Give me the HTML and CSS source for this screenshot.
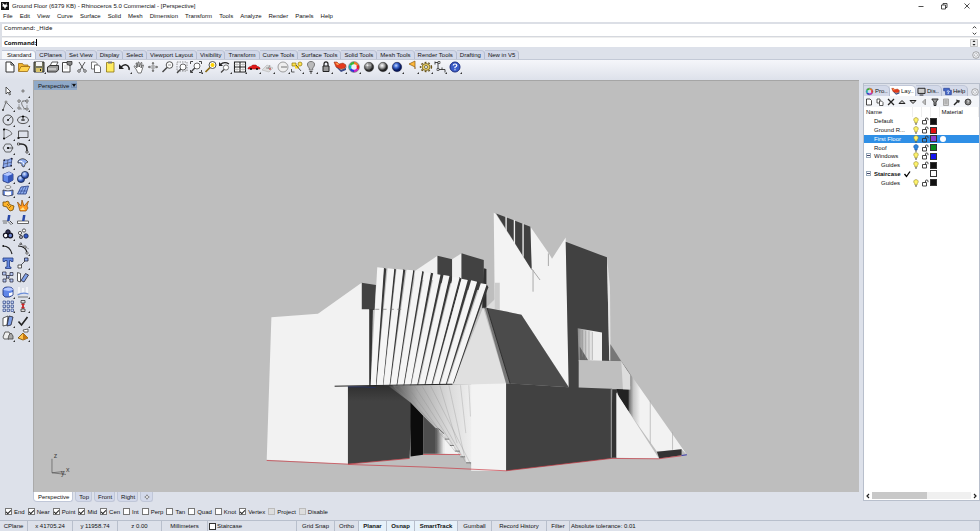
FILE: index.html
```
<!DOCTYPE html>
<html lang="en">
<head>
  <meta charset="UTF-8">
  <title>Ground Floor - Rhinoceros 5.0 Commercial</title>
  <link rel="stylesheet" href="styles.css">
</head>
<body>
  <!-- shared icons -->
  <svg class="defs" width="0" height="0">
    <symbol id="bulb" viewBox="0 0 8 8"><path d="M4 .7C1.300 .7 1.300 3.500 2.900 4.800V6H5.100V4.800C6.700 3.500 6.700 .7 4 .7z" fill="#fff36b" stroke="#99913a" stroke-width=".7"/><path d="M3 7h2" stroke="#555"/></symbol>
    <symbol id="bulb-off" viewBox="0 0 8 8"><path d="M4 .7C1.300 .7 1.300 3.500 2.900 4.800V6H5.100V4.800C6.700 3.500 6.700 .7 4 .7z" fill="#2f86e0" stroke="#1c5aa8" stroke-width=".7"/><path d="M3 7h2" stroke="#555"/></symbol>
    <symbol id="unlock" viewBox="0 0 8 8"><path d="M1.500 3.500h4v3.500h-4zM4.500 3.500V2q0-1 1.200-1T7 2v1.200" fill="none" stroke="#333" stroke-width=".9"/></symbol>
    <symbol id="layers" viewBox="0 0 14 14"><path d="M3 7l5 5 5-2V7z" fill="#3a4a8a"/><path d="M3 6l5 4 5-2V6z" fill="#fff" stroke="#444" stroke-width=".5"/><path d="M1 2l3 0 2 2 4-1 3 2-1 3-4 1-5-2z" fill="#e43a1c" stroke="#831" stroke-width=".5"/><path d="M2 2.500l3 .5 1 2-2 0z" fill="#ff9a50"/></symbol>
    <symbol id="wheel" viewBox="0 0 14 14"><g fill="none" stroke-width="2.500"><path d="M7 3a4 4 0 0 1 3.500 2" stroke="#f08020"/><path d="M10.500 5a4 4 0 0 1 0 4" stroke="#e22"/><path d="M10.500 9A4 4 0 0 1 7 11" stroke="#c2c"/><path d="M7 11a4 4 0 0 1-3.500-2" stroke="#33d"/><path d="M3.500 9a4 4 0 0 1 0-4" stroke="#1bb"/><path d="M3.500 5A4 4 0 0 1 7 3" stroke="#3b3"/></g><circle cx="7" cy="7" r="5.400" fill="none" stroke="#444" stroke-width=".5"/></symbol>
    <symbol id="gear" viewBox="0 0 8 8"><circle cx="4" cy="4" r="3.300" fill="#eef0f5" stroke="#777" stroke-width=".6"/><circle cx="4" cy="4" r="1.500" fill="none" stroke="#888" stroke-width=".6" stroke-dasharray="1 .6"/></symbol>
    <radialGradient id="ballGrey" cx=".4" cy=".35"><stop offset="0" stop-color="#fff"/><stop offset=".5" stop-color="#aaa"/><stop offset="1" stop-color="#222"/></radialGradient>
    <radialGradient id="ballBlue" cx=".4" cy=".35"><stop offset="0" stop-color="#c5d8ff"/><stop offset=".5" stop-color="#3a66d0"/><stop offset="1" stop-color="#081a60"/></radialGradient>
    <radialGradient id="ballSoft" cx=".4" cy=".35"><stop offset="0" stop-color="#e2ebff"/><stop offset=".6" stop-color="#6a8fe0"/><stop offset="1" stop-color="#2a48a0"/></radialGradient>
  </svg>

  <header class="titlebar">
    <svg class="logo" viewBox="0 0 8 8"><path d="M0 0h8v8H0z" fill="#111"/><path d="M1 1l2 1 1 1 2-2-.5 2L7 4 5 5 4 7 3 5 1 4l1-1z" fill="#fff"/></svg>
    <h1>Ground Floor (6379 KB) - Rhinoceros 5.0 Commercial - [Perspective]</h1>
    <div class="winbuttons">
      <button type="button" aria-label="Minimize"><svg viewBox="0 0 8 8"><path d="M1.500 4.500h5" stroke="#222" stroke-width=".8"/></svg></button>
      <button type="button" aria-label="Restore"><svg viewBox="0 0 8 8"><path d="M1.500 3h4v4h-4zM3 3V1.500h4v4H5.500" fill="none" stroke="#222" stroke-width=".8"/></svg></button>
      <button type="button" aria-label="Close"><svg viewBox="0 0 8 8"><path d="M1.500 1.500l5 5M6.500 1.500l-5 5" stroke="#222" stroke-width=".8"/></svg></button>
    </div>
  </header>

  <nav class="menu">
    <a href="#">File</a><a href="#">Edit</a><a href="#">View</a><a href="#">Curve</a><a href="#">Surface</a><a href="#">Solid</a><a href="#">Mesh</a><a href="#">Dimension</a><a href="#">Transform</a><a href="#">Tools</a><a href="#">Analyze</a><a href="#">Render</a><a href="#">Panels</a><a href="#">Help</a>
  </nav>

  <section class="command">
    <div class="history"><span>Command: _Hide</span>
      <svg class="arrows" viewBox="0 0 8 14"><path d="M2 4.500l2-2 2 2M2 9.500l2 2 2-2" fill="none" stroke="#222"/></svg>
    </div>
    <div class="prompt"><label for="cmd">Command:</label><span class="caret"></span><input id="cmd" type="text">
      <svg class="spin" viewBox="0 0 8 8"><path d="M.5.5h7v7h-7z" fill="#eee" stroke="#aaa" stroke-width=".6"/><path d="M2.500 3L4 1.300 5.500 3zM2.500 5L4 6.700 5.500 5z" fill="#222"/></svg>
    </div>
  </section>

  <nav class="tooltabs">
    <button type="button" class="on">Standard</button><button type="button">CPlanes</button><button type="button">Set View</button><button type="button">Display</button><button type="button">Select</button><button type="button">Viewport Layout</button><button type="button">Visibility</button><button type="button">Transform</button><button type="button">Curve Tools</button><button type="button">Surface Tools</button><button type="button">Solid Tools</button><button type="button">Mesh Tools</button><button type="button">Render Tools</button><button type="button">Drafting</button><button type="button">New in V5</button>
    <svg class="cog"><use href="#gear"/></svg>
  </nav>

  <div class="toolbar">
    <div class="tools">
      <button type="button" aria-label="New"><svg viewBox="0 0 14 14"><path d="M3 2h5l3 3v7H3zM8 2v3h3" fill="#fff" stroke="#333"/></svg></button>
      <button type="button" aria-label="Open"><svg viewBox="0 0 14 14"><path d="M1.500 11V3.500h4l1 1.500H11v2" fill="#f2b632" stroke="#9a6a10" stroke-width=".8"/><path d="M1.500 11.500L4 6.500h9l-2.500 5z" fill="#ffd34d" stroke="#9a6a10" stroke-width=".8"/></svg></button>
      <button type="button" class="fly" aria-label="Save"><svg viewBox="0 0 14 14"><path d="M2 2h10v10H2z" fill="#77775f" stroke="#333"/><path d="M4 2h6v4H4z" fill="#f5f5f5"/><path d="M4 8h6v4H4z" fill="#d8c46a"/><path d="M8 9h1v2H8z" fill="#222"/></svg></button>
      <button type="button" aria-label="Print"><svg viewBox="0 0 14 14"><path d="M4 6l2-4h6l-2 4" fill="#fff" stroke="#333" stroke-width=".8"/><path d="M1.500 7L4 5.500h8.500V10L10 12H1.500z" fill="#999" stroke="#333"/><path d="M2 9h8" stroke="#eee"/></svg></button>
      <button type="button" aria-label="Document Properties"><svg viewBox="0 0 14 14"><path d="M2.500 2.500h7.500v9.500h-7.500z" fill="#fff" stroke="#444"/><path d="M4 6h4M4 8h4" stroke="#bbb" stroke-width=".7"/><path d="M7 1.500h5v3l-2 1-3-1z" fill="#888" stroke="#222" stroke-width=".7"/></svg></button>
      <button type="button" aria-label="Cut"><svg viewBox="0 0 14 14"><path d="M4 2l5 8M10 2L5 10" stroke="#555"/><circle cx="4" cy="11" r="1.300" fill="none" stroke="#444" stroke-width=".8"/><circle cx="10" cy="11" r="1.300" fill="none" stroke="#444" stroke-width=".8"/></svg></button>
      <button type="button" aria-label="Copy"><svg viewBox="0 0 14 14"><path d="M2.500 2h4L8 3.500V9H2.500z" fill="#fff" stroke="#555" stroke-width=".8"/><path d="M5.500 5h4L11.500 7v5.500h-6z" fill="#fff" stroke="#444" stroke-width=".8"/></svg></button>
      <button type="button" aria-label="Paste"><svg viewBox="0 0 14 14"><path d="M3.500 2.500h7.500V12H3.500z" fill="#ffec62" stroke="#8a7410" stroke-width=".8"/><path d="M5 1.500h4v2H5z" fill="#777"/></svg></button>
      <button type="button" class="fly" aria-label="Undo"><svg viewBox="0 0 14 14"><path d="M3 7q4-4 7-1 1.500 1.500 1 4" fill="none" stroke="#222" stroke-width="1.400"/><path d="M1 4v5h5z" fill="#222"/></svg></button>
      <button type="button" aria-label="Pan"><svg viewBox="0 0 14 14"><path d="M4 9L2 6.500l1-.8L5 8 4 3h1l1 4V2h1l.5 5L9 2.500l1 .3L9 8l1.500-3h1L10 10l-1 3H6z" fill="#fff" stroke="#444" stroke-width=".7"/></svg></button>
      <button type="button" aria-label="Rotate View"><svg viewBox="0 0 14 14"><path d="M7 2v10M2 7h10M7 2L6 4h2zM7 12l-1-2h2zM2 7l2-1v2zM12 7l-2-1v2z" stroke="#777" stroke-width=".6" fill="#666"/><ellipse cx="7" cy="7" rx="3" ry="1.500" fill="none" stroke="#999" stroke-width=".6"/></svg></button>
      <button type="button" aria-label="Zoom Dynamic"><svg viewBox="0 0 14 14"><circle cx="8.500" cy="5" r="3.300" fill="#fff" stroke="#444" stroke-width=".9"/><path d="M6 7.500L1.500 12" stroke="#444" stroke-width="1.500"/><path d="M7 5h3" stroke="#777" stroke-width=".7"/></svg></button>
      <button type="button" aria-label="Zoom Window"><svg viewBox="0 0 14 14"><path d="M2 2h10v9H2z" fill="none" stroke="#777" stroke-width=".8" stroke-dasharray="1.500 1"/><circle cx="8" cy="7" r="3" fill="#fff" stroke="#444" stroke-width=".8"/><path d="M5.800 9L2 13" stroke="#444" stroke-width="1.300"/></svg></button>
      <button type="button" class="fly" aria-label="Zoom Extents"><svg viewBox="0 0 14 14"><path d="M1.500 4V1.500H4M10 1.500h2.500V4M12.500 10v2.500H10M4 12.500H1.500V10" fill="none" stroke="#333" stroke-width=".9"/><circle cx="8" cy="6" r="3" fill="#fff" stroke="#444" stroke-width=".8"/><path d="M5.800 8L2 12" stroke="#444" stroke-width="1.300"/></svg></button>
      <button type="button" aria-label="Zoom Selected"><svg viewBox="0 0 14 14"><circle cx="8.500" cy="5" r="3.500" fill="#fff" stroke="#444" stroke-width=".9"/><circle cx="8.500" cy="5" r="2" fill="#ffd400"/><path d="M6 7.500L1.500 12" stroke="#8a6a10" stroke-width="1.700"/></svg></button>
      <button type="button" class="fly" aria-label="Undo View"><svg viewBox="0 0 14 14"><path d="M2 5q4-4 9-1" fill="none" stroke="#222" stroke-width="1.200"/><path d="M1 2v4h4z" fill="#222"/><circle cx="8" cy="7.500" r="2.600" fill="#fff" stroke="#555" stroke-width=".8"/><path d="M6 9.500L3 12.500" stroke="#444" stroke-width="1.300"/></svg></button>
      <button type="button" class="fly" aria-label="Four View"><svg viewBox="0 0 14 14"><path d="M1.500 2h11v10h-11zM7 2v10M1.500 7h11" fill="#fff" stroke="#222" stroke-width="1.100"/><path d="M4 2v10M10 2v10M1.500 4.500h11M1.500 9.500h11" stroke="#999" stroke-width=".5"/></svg></button>
      <button type="button" class="fly" aria-label="Shade"><svg viewBox="0 0 14 14"><path d="M1 8q1-1.500 3-1.500l1.500-1.500H9l1.500 1.500q2 .3 2.500 1.500v1H1z" fill="#e01818" stroke="#901010" stroke-width=".5"/><circle cx="4" cy="9" r="1"/><circle cx="10" cy="9" r="1"/></svg></button>
      <button type="button" class="fly" aria-label="CPlane"><svg viewBox="0 0 14 14"><path d="M1 10l5-5 6 3-4 4z" fill="#ddd" stroke="#bbb" stroke-width=".7"/><path d="M5 8h5M7 9l2-4" stroke="#888" stroke-width=".8"/><circle cx="9" cy="9" r=".9" fill="#c55"/></svg></button>
      <button type="button" class="fly" aria-label="Hide"><svg viewBox="0 0 14 14"><circle cx="7" cy="7" r="5" fill="#eee" stroke="#888" stroke-width=".8"/><path d="M5 7h6" stroke="#555" stroke-width=".8"/></svg></button>
      <button type="button" class="fly" aria-label="Object Snap"><svg viewBox="0 0 14 14"><path d="M2 3h4v3H2z" fill="#ffe34d" stroke="#8a7410" stroke-width=".7"/><circle cx="10" cy="4" r="2" fill="#ffe34d" stroke="#8a7410" stroke-width=".7"/><path d="M5 5.500h4v3H5z" fill="#ffd82a"/><path d="M6 5l5 6M1.500 9v3h3" stroke="#333" stroke-width=".8" fill="none"/></svg></button>
      <button type="button" class="fly" aria-label="Show"><svg viewBox="0 0 14 14"><path d="M7 1.500C2.500 1.500 2.800 6 5.300 8v2h3.400V8C11.200 6 11.500 1.500 7 1.500z" fill="#bbb" stroke="#777"/><path d="M5.500 11.500h3M6 13h2" stroke="#444"/></svg></button>
      <button type="button" class="fly" aria-label="Lock"><svg viewBox="0 0 14 14"><path d="M5 6V4q0-2.200 2-2.200T9 4v2" fill="none" stroke="#222" stroke-width="1.200"/><path d="M4 6h6v5.500H4z" fill="#999" stroke="#222"/></svg></button>
      <button type="button" class="fly" aria-label="Layers"><svg><use href="#layers"/></svg></button>
      <button type="button" class="fly" aria-label="Properties"><svg><use href="#wheel"/></svg></button>
      <button type="button" aria-label="Render Preview"><svg viewBox="0 0 14 14"><circle cx="7" cy="7" r="4.700" fill="url(#ballGrey)" stroke="#333" stroke-width=".5"/><path d="M7 2.500v9M2.500 7h9" stroke="#555" stroke-width=".6"/></svg></button>
      <button type="button" class="fly" aria-label="Render"><svg viewBox="0 0 14 14"><circle cx="7" cy="7" r="4.700" fill="url(#ballGrey)" stroke="#333" stroke-width=".5"/></svg></button>
      <button type="button" class="fly" aria-label="Render Blue"><svg viewBox="0 0 14 14"><circle cx="7" cy="7" r="4.700" fill="url(#ballBlue)" stroke="#113" stroke-width=".5"/></svg></button>
      <button type="button" class="fly" aria-label="Spotlight"><svg viewBox="0 0 14 14"><path d="M4 4l6-3v6z" fill="#ffb83a" stroke="#8a5a10" stroke-width=".7"/><path d="M10 7v2" stroke="#8a5a10"/></svg></button>
      <button type="button" class="fly" aria-label="Options"><svg viewBox="0 0 14 14"><ellipse cx="7" cy="7" rx="4" ry="3.500" fill="#e8cd62" stroke="#6a5a20" stroke-width=".8"/><ellipse cx="7" cy="7" rx="5.500" ry="4.500" fill="none" stroke="#6a5418" stroke-width="1.400" stroke-dasharray="1.800 1.800"/><circle cx="7" cy="7" r="1.500" fill="#fff" stroke="#443" stroke-width=".7"/></svg></button>
      <button type="button" class="fly" aria-label="Dimension"><svg viewBox="0 0 14 14"><path d="M2 2.500h3v7h7v3M2 1.500v3M9 9.500v-2" fill="none" stroke="#333" stroke-width=".9"/><path d="M5 1.500h2v2H5zM4 8.500h2v2H4z" fill="#fff" stroke="#333" stroke-width=".7"/></svg></button>
      <button type="button" class="fly" aria-label="Help"><svg viewBox="0 0 14 14"><circle cx="7" cy="7" r="5" fill="#3a5cc8" stroke="#1a2c80"/><path d="M5.200 5.500Q5.400 4 7 4t1.800 1.400Q8.800 6.500 7 7.200v1M7 9.300v1" fill="none" stroke="#fff" stroke-width="1.200"/></svg></button>
    </div>
  </div>

  <main class="work">
    <aside class="sidetools">
      <button type="button" aria-label="Select"><svg viewBox="0 0 14 14"><path d="M5 3v7l2-2 1.500 3 1-.5L8.300 8H10z" fill="#fff" stroke="#333" stroke-width=".8"/></svg></button>
      <button type="button" class="fly" aria-label="Point"><svg viewBox="0 0 14 14"><circle cx="7" cy="7" r="1.100" fill="#fff" stroke="#333" stroke-width=".7"/></svg></button>
      <button type="button" class="fly" aria-label="Polyline"><svg viewBox="0 0 14 14"><path d="M2 12l3-8 7 7" fill="none" stroke="#555" stroke-width=".8"/><circle cx="5" cy="4" r="1" fill="#fff" stroke="#333" stroke-width=".6"/><circle cx="2" cy="12" r="1" fill="#333"/></svg></button>
      <button type="button" class="fly" aria-label="Curve"><svg viewBox="0 0 14 14"><path d="M11 3q-7-1-5 4t5 4" fill="none" stroke="#666" stroke-width=".8"/><path d="M3 3h8v8H3z" fill="none" stroke="#777" stroke-width=".6" stroke-dasharray="2 1"/><path d="M2 2h2v2H2zM10 2h2v2h-2zM10 10h2v2h-2zM2 9h2v2H2z" fill="#fff" stroke="#333" stroke-width=".6"/></svg></button>
      <button type="button" class="fly" aria-label="Circle"><svg viewBox="0 0 14 14"><circle cx="7" cy="7" r="5" fill="none" stroke="#444" stroke-width=".9"/><path d="M7 7l4-4" stroke="#444" stroke-width=".8"/><circle cx="7" cy="7" r=".9"/></svg></button>
      <button type="button" class="fly" aria-label="Ellipse"><svg viewBox="0 0 14 14"><ellipse cx="7" cy="7" rx="5.500" ry="3.600" fill="none" stroke="#444" stroke-width=".9"/><path d="M5 7h4M7 3v5" stroke="#333"/><circle cx="7" cy="3.400" r="1"/></svg></button>
      <button type="button" class="fly" aria-label="Arc"><svg viewBox="0 0 14 14"><path d="M3 2q7 1 8 5L3 12z" fill="none" stroke="#555" stroke-width=".8"/><circle cx="3" cy="2.500" r="1"/><circle cx="3" cy="11.500" r="1"/></svg></button>
      <button type="button" class="fly" aria-label="Rectangle"><svg viewBox="0 0 14 14"><path d="M2.500 4h9.500v6.500H2.500z" fill="none" stroke="#444" stroke-width=".9"/><path d="M1.500 10h2v2h-2z" fill="#222"/></svg></button>
      <button type="button" class="fly" aria-label="Polygon"><svg viewBox="0 0 14 14"><path d="M4.500 3h5L12 7l-2.500 4h-5L2 7z" fill="none" stroke="#444" stroke-width=".8"/><path d="M7 7h5" stroke="#333" stroke-width=".8"/><circle cx="7" cy="7" r="1.100"/></svg></button>
      <button type="button" class="fly" aria-label="Fillet"><svg viewBox="0 0 14 14"><path d="M2 3h3q6 0 6 6v3" fill="none" stroke="#222" stroke-width="1.500"/><path d="M1.500 2h2v2h-2zM10 10h2v2h-2z" fill="#fff" stroke="#222" stroke-width=".7"/></svg></button>
      <button type="button" class="fly" aria-label="Surface"><svg viewBox="0 0 14 14"><path d="M3 4q4 1 8-2l-1 8q-4 0-8 2z" fill="#8fadf0" stroke="#223a80" stroke-width=".7"/><path d="M7 3.500L6 11M3 8l8-2" stroke="#334" stroke-width=".5"/><path d="M2.500 3.500h1.500V5H2.500zM10 2h1.500v1.500H10zM9.500 9H11v1.500H9.500zM1.500 11H3v1.500H1.500z" fill="#223"/></svg></button>
      <button type="button" class="fly" aria-label="Sweep"><svg viewBox="0 0 14 14"><path d="M2 5q4-4 8-1l2 2q-3 0-4 5l-2-1q0-4-4-3z" fill="#8fadf0" stroke="#333" stroke-width=".8"/><path d="M3 5.500q4-1 5 3" fill="none" stroke="#fff"/></svg></button>
      <button type="button" class="fly" aria-label="Box"><svg viewBox="0 0 14 14"><path d="M2 4.500L8 2l4 2v6l-5 3-5-2z" fill="#5f86e8" stroke="#1a2c70" stroke-width=".8"/><path d="M2 4.500L8 2l4 2-5 2z" fill="#b5c8ff"/><path d="M7 6l5-2v6l-5 3z" fill="#3556b8"/></svg></button>
      <button type="button" class="fly" aria-label="Boolean"><svg viewBox="0 0 14 14"><circle cx="5" cy="9" r="3.600" fill="url(#ballSoft)" stroke="#124" stroke-width=".7"/><circle cx="9" cy="5" r="3.600" fill="url(#ballSoft)" stroke="#124" stroke-width=".7"/></svg></button>
      <button type="button" class="fly" aria-label="Extract"><svg viewBox="0 0 14 14"><path d="M2 6v5q5 2 10 0V6q-5 2-10 0z" fill="#6d92e8" stroke="#334" stroke-width=".8"/><path d="M4 7.500v3.500q3 .8 6 0V7.500z" fill="#fff"/><ellipse cx="7" cy="3" rx="3" ry="1.400" fill="#fff" stroke="#666" stroke-width=".7"/></svg></button>
      <button type="button" class="fly" aria-label="Mesh"><svg viewBox="0 0 14 14"><path d="M1.500 10L5 3l7.500-1L10 10z" fill="#8faef0" stroke="#223a80" stroke-width=".8"/><path d="M4 10l3.500-7M7 10l3-7M3 7h8" stroke="#223a80" stroke-width=".6"/></svg></button>
      <button type="button" aria-label="Join"><svg viewBox="0 0 14 14"><path d="M2 3h3l1-1 2 1v2l2 1 3 1-1 4-3 1-2-2-1-2-4-1z" fill="#ffb42a" stroke="#704a08" stroke-width=".8"/><path d="M6 5l2 2M8 9l2-2" stroke="#704a08" stroke-width=".7"/></svg></button>
      <button type="button" aria-label="Explode"><svg viewBox="0 0 14 14"><path d="M1.500 3L5 7l1-6 2 6 4.500-5L11 7l1 2-2 3H4z" fill="#ff9a1e" stroke="#8a4a08" stroke-width=".7"/><path d="M4 11l3-3 2 3" fill="#ffe08a"/></svg></button>
      <button type="button" aria-label="Trim"><svg viewBox="0 0 14 14"><path d="M1.500 8h5l4 4M2 10h4" stroke="#555" stroke-width=".8" fill="none"/><path d="M7 2h2.500l-1 6H6z" fill="#2848a8"/><path d="M9 8l3 3" stroke="#222" stroke-width=".8"/></svg></button>
      <button type="button" aria-label="Split"><svg viewBox="0 0 14 14"><path d="M1.500 8h11v2.500h-11z" fill="#fff" stroke="#444" stroke-width=".8"/><path d="M7 2h2.500l-1 6H6z" fill="#2848a8"/></svg></button>
      <button type="button" class="fly" aria-label="Group"><svg viewBox="0 0 14 14"><circle cx="7" cy="5" r="2.200" fill="#335" stroke="#112"/><circle cx="4.700" cy="8.500" r="2.300" fill="#fff" stroke="#112" stroke-width="1.200"/><circle cx="9.300" cy="8.500" r="2.300" fill="#6d86d0" stroke="#112" stroke-width="1.200"/></svg></button>
      <button type="button" aria-label="Ungroup"><svg viewBox="0 0 14 14"><circle cx="8" cy="3.500" r="1.600" fill="#fff" stroke="#333" stroke-width=".8"/><circle cx="4" cy="6" r="1.600" fill="#fff" stroke="#333" stroke-width=".8"/><circle cx="5" cy="10" r="1.600" fill="#99a" stroke="#333" stroke-width=".8"/><circle cx="10" cy="9" r="2.200" fill="#3358c8" stroke="#124" stroke-width=".8"/></svg></button>
      <button type="button" aria-label="Edit Points"><svg viewBox="0 0 14 14"><path d="M2 4q7 0 9 8" fill="none" stroke="#222" stroke-width="1.200"/><path d="M1.500 3H3v2H1.500z" fill="#222"/></svg></button>
      <button type="button" class="fly" aria-label="Control Points"><svg viewBox="0 0 14 14"><path d="M2 4q8 0 9 7" fill="none" stroke="#222" stroke-width="1.100"/><path d="M4 1l5 4 4 2M2 4l3-3" stroke="#777" stroke-width=".6" fill="none"/><path d="M4 1h1.500v1.500H4zM8 4h2v2H8zM10 10h2v2h-2z" fill="#fff" stroke="#222" stroke-width=".6"/></svg></button>
      <button type="button" aria-label="Text"><svg viewBox="0 0 14 14"><path d="M2 2h10v3.500h-2V4.500H8.500V11H10v1.500H4.500V11H6V4.500H4v1H2z" fill="#6488e0" stroke="#223a80" stroke-width=".8"/></svg></button>
      <button type="button" class="fly" aria-label="Move"><svg viewBox="0 0 14 14"><path d="M4 10l5-5" stroke="#333" stroke-width=".8"/><path d="M8.500 2H12v3H8.500z" fill="#8fadf0" stroke="#223" stroke-width=".8"/><path d="M2 9h3.500v3H2z" fill="#fff" stroke="#333" stroke-width=".8"/></svg></button>
      <button type="button" aria-label="Copy Objects"><svg viewBox="0 0 14 14"><path d="M4 4l6 7M4 10l6-6" stroke="#333" stroke-width=".7"/><path d="M1.500 2H5v3H1.500zM9 2.500h3V5.500H9zM2 9h3v3H2zM9 9h3v3H9zM5.500 5.500H8V8H5.500z" fill="#b3c5f2" stroke="#223" stroke-width=".7"/></svg></button>
      <button type="button" aria-label="Rotate"><svg viewBox="0 0 14 14"><path d="M1.500 2.500l3 1v8.500l-3-1z" fill="#fff" stroke="#333" stroke-width=".8"/><path d="M9.500 3.500l3 1.500L8 12l-3-1.500z" fill="#7d9fe8" stroke="#223" stroke-width=".8"/></svg></button>
      <button type="button" class="fly" aria-label="Solid Edit"><svg viewBox="0 0 14 14"><path d="M2 5q0-3 5-3t5 3v5q-3 3-8 2l-2-2z" fill="#5f86e8" stroke="#1a2c70" stroke-width=".8"/><path d="M2 5q2-3 6-2.500T12 5L8 6z" fill="#b5c8ff"/><path d="M8 8q2 0 3.500-1v3q-2 1-3.500 1z" fill="#fff"/></svg></button>
      <button type="button" class="fly" aria-label="Project"><svg viewBox="0 0 14 14"><path d="M3 2v6M7 3v5M11 2v6" stroke="#fff" stroke-width="1.200"/><path d="M1.500 10q5-3 11-1" fill="none" stroke="#6d8fd8" stroke-width="1.200"/><path d="M2 12h10" stroke="#555" stroke-width=".8"/></svg></button>
      <button type="button" class="fly" aria-label="Array"><svg viewBox="0 0 14 14"><g fill="#c7d4f5" stroke="#334a88" stroke-width=".7"><path d="M2 2h2.500v2.500H2zM6 2h2.500v2.500H6zM10 2h2.500v2.500H10zM2 6h2.500v2.500H2zM6 6h2.500v2.500H6zM10 6h2.500v2.500H10zM2 10h2.500v2.500H2zM6 10h2.500v2.500H6zM10 10h2.500v2.500H10z"/></g></svg></button>
      <button type="button" class="fly" aria-label="Dimension Vertical"><svg viewBox="0 0 14 14"><path d="M7 2v10" stroke="#222"/><path d="M5 1.500h4V4H5zM5 10h4v2.500H5z" fill="#ddd" stroke="#222" stroke-width=".7"/><path d="M5.500 5L8.500 9H5.500L8.500 5z" fill="#d82222" stroke="#d82222" stroke-width=".6"/></svg></button>
      <button type="button" class="fly" aria-label="Analyze"><svg viewBox="0 0 14 14"><path d="M2 4l5-2-1 9-4 1z" fill="#fff" stroke="#333" stroke-width=".8"/><path d="M8 2l4 1-2 8-4 1z" fill="#7d9fe8" stroke="#223" stroke-width=".8"/></svg></button>
      <button type="button" class="fly" aria-label="Check"><svg viewBox="0 0 14 14"><path d="M2.500 7.500L5.500 11l6-8" fill="none" stroke="#222" stroke-width="1.600"/></svg></button>
      <button type="button" class="fly" aria-label="Block"><svg viewBox="0 0 14 14"><path d="M2 9l2-5h4l2 4-2 3H3z" fill="#eee" stroke="#555" stroke-width=".9"/><path d="M8 7l2-2 2 3v3H7z" fill="#aaa" stroke="#444" stroke-width=".8"/></svg></button>
      <button type="button" class="fly" aria-label="Render Tools"><svg viewBox="0 0 14 14"><path d="M2 10l5-5 5 5-5 2z" fill="#ffc24a" stroke="#704a08" stroke-width=".8"/><path d="M7 5v7l5-2z" fill="#c87a10"/><path d="M7 2l5-1v3H8z" fill="#fff" stroke="#444" stroke-width=".8"/></svg></button>
    </aside>

    <section class="center">
      <div class="viewport">
        <button type="button" class="vplabel"><span>Perspective</span><i></i></button>
        <!-- model view, drawn at three units per pixel -->
        <svg class="scene" viewBox="-681 -357 2478 1233">
          <defs>
            <linearGradient id="cone"><stop offset="0" stop-color="#4a4a4a"/><stop offset=".25" stop-color="#aaa"/><stop offset=".5" stop-color="#d8d8d8"/><stop offset=".72" stop-color="#f0f0f0"/><stop offset="1" stop-color="#f3f3f3"/></linearGradient>
            <linearGradient id="nook"><stop offset="0" stop-color="#555"/><stop offset="1" stop-color="#f3f3f3"/></linearGradient>
            <linearGradient id="glass"><stop offset="0" stop-color="#888"/><stop offset=".3" stop-color="#ccc"/><stop offset=".65" stop-color="#eee"/></linearGradient>
            <linearGradient id="slope" gradientUnits="userSpaceOnUse" x1="1100" y1="600" x2="1140" y2="600"><stop offset="0" stop-color="#444"/><stop offset=".5" stop-color="#c8c8c8"/><stop offset="1" stop-color="#f2f2f2"/></linearGradient>
            <linearGradient id="under" x1="0" y1="0" x2="0" y2="1"><stop offset="0" stop-color="#303030"/><stop offset=".2" stop-color="#424242"/></linearGradient>
          </defs>
          <!-- rear volumes -->
          <path d="M462 214L531 167V240H462z" fill="#f0f0f0"/>
          <path d="M531 167L575 178V250H531z" fill="#424242"/>
          <path d="M575 178L603 160V250H575z" fill="#f0f0f0"/>
          <path d="M603 160L670 180V270H603z" fill="#424242"/>
          <path d="M670 205L678 207V325H665z" fill="#303030"/>
          <path d="M678 322L703 298V330H678z" fill="#ddd"/>
          <path d="M303 248L346 255 342 330H303z" fill="#424242"/>
          <!-- left wall -->
          <path d="M32 352L172 341 303 248V328H326V558H262V793L18 780z" fill="#f2f2f2"/>
          <path d="M326 328H337L331 558H326z" fill="#333"/>
          <!-- right gable -->
          <path d="M668 322L737 552H577z" fill="#e0e0e0"/>
          <!-- fins -->
          <g fill="#383838">
            <path d="M369 203L377 206 348 557H344zM400 206L406 208 368 557H364zM427 208L434 210 389 557H384zM457 210L462 212 410 556H405zM484 213L490 215 431 556H426zM510 218L518 220 451 556H447zM539 223L547 225 472 555H467zM566 227L574 230 494 555H489zM596 232L604 236 515 554H511zM621 238L630 242 537 554H532zM649 243L658 247 558 553H553zM678 252L684 262 660 322 580 550H575z"/>
          </g>
          <g fill="#f5f5f5">
            <path d="M350 202L370 204 346 557H330zM381 205L401 207 367 557H348zM408 207L428 209 387 557H369zM438 209L458 211 408 556H390zM466 212L485 214 429 556H411zM493 217L511 219 450 556H432zM521 221L540 224 470 555H453zM549 225L567 228 492 555H475zM577 231L597 234 513 554H496zM603 236L622 240 535 554H518zM632 241L650 245 556 553H540zM661 250L679 253 577 552H561z"/>
          </g>
          <path d="M344 328H430" stroke="#777" stroke-width="2" stroke-dasharray="12 10"/>
          <!-- undercroft -->
          <path d="M262 560L395 557 455 605 447 775 262 793z" fill="url(#under)"/>
          <path d="M450 605L488 645V765L450 770z" fill="#0c0c0c"/>
          <path d="M488 645L526 680V762H488z" fill="#4d4d4d"/>
          <path d="M526 680L551 700V762H526z" fill="url(#nook)"/>
          <path d="M551 700L600 765 551 762z" fill="#f3f3f3"/>
          <path d="M385 559L737 551V813L636 806 634 790 616 788 614 772 600 770 598 755 582 753 580 738 568 736 566 719 553 717 551 702 538 700 534 686 524 684 488 648 450 608z" fill="url(#cone)"/>
          <path d="M400 560L551 702M420 560L568 736M440 560L582 753M462 559L600 770M485 559L616 788M510 558L634 800M538 557L590 730M565 556L612 770M600 556L616 700M625 556L630 650" fill="none" stroke="#888" stroke-opacity=".3" stroke-width="3"/>
          <path d="M534 686L551 702M553 718H566M568 737H580M583 754H598M600 771H614M617 789H634" stroke="#444" stroke-width="2"/>
          <path d="M632 554V813H737V552z" fill="#f3f3f3"/>
          <path d="M222 559L576 553" stroke="#222" stroke-width="3"/>
          <path d="M262 561H300L345 563" stroke="#223070" stroke-width="2" fill="none"/>
          <!-- tower -->
          <path d="M700 38L706 42 813 208 810 80 864 158 875 176 916 112 926 562 783 344 703 328z" fill="#f3f3f3"/>
          <path d="M707 40L810 80 814 210z" fill="#404040"/>
          <path d="M737 50V92M762 60V132M788 70V170" stroke="#eee" stroke-width="4"/>
          <path d="M813 205L839 240M818 210V275M864 160V198" stroke="#aaa" stroke-width="3"/>
          <path d="M703 248H718V330L703 328z" fill="#ccc"/>
          <path d="M916 125L1040 172 1047 490 1056 570 1056 775 737 813V550L925 562z" fill="#414141"/>
          <path d="M1040 172L1049 260 1051 480H1047z" fill="#e5e5e5"/>
          <!-- sloped roof -->
          <path d="M678 323L783 344 925 562 747 551z" fill="#4b4b4b"/>
          <path d="M672 322L680 324 749 551H737z" fill="#777"/>
          <path d="M680 324L749 551" stroke="#303030" stroke-width="3"/>
          <!-- balcony -->
          <path d="M952 385L1025 398V484H955z" fill="url(#glass)"/>
          <path d="M958 440L984 482H958z" fill="#666"/>
          <path d="M966 390V470M976 392V478M986 394V480M996 396V480" stroke="#888" stroke-width="1.500"/>
          <path d="M1050 432L1083 484H1050z" fill="#777"/>
          <path d="M1083 484L1280 765 1264 748 1190 755 1100 628 1070 575 1088 566z" fill="url(#slope)"/>
          <path d="M1170 602V730M1237 696V750M1103 512V560" stroke="#aaa" stroke-width="2"/>
          <path d="M1068 566H1105V634L1075 590z" fill="#222"/>
          <path d="M955 480L1083 484 1110 560V569L955 563z" fill="#bfbfbf"/>
          <path d="M1083 484L1110 525V569L1088 568z" fill="#ddd"/>
          <!-- right wing -->
          <path d="M1056 568H1070V774H1052z" fill="#333"/>
          <path d="M1053 568V774" stroke="#ddd" stroke-width="2"/>
          <path d="M1068 578L1196 776 1068 774z" fill="#f2f2f2"/>
          <path d="M1190 756L1264 748V766L1197 776z" fill="#333"/>
          <!-- base outline -->
          <path d="M18 782L262 793 447 776M262 794L500 802 737 813 1053 776 1195 777 1264 768M488 764L600 764" fill="none" stroke="#c8323c" stroke-width="2"/>
          <path d="M1264 767L1280 765" stroke="#33a" stroke-width="3"/>
          <!-- axes -->
          <path d="M-627 777V819L-585 824M-627 819L-590 815" fill="none" stroke="#555" stroke-width="2"/>
          <g class="axis"><text x="-622" y="774">z</text><text x="-600" y="826">y</text><text x="-585" y="816">x</text></g>
        </svg>
      </div>
      <nav class="vptabs">
        <button type="button" class="on">Perspective</button><button type="button">Top</button><button type="button">Front</button><button type="button">Right</button><button type="button" aria-label="Add viewport"><svg viewBox="0 0 8 8"><path d="M4 1l1 2 2 1-2 1-1 2-1-2-2-1 2-1z" fill="#fff" stroke="#555" stroke-width=".8"/></svg></button>
      </nav>
    </section>

    <aside class="panel">
      <nav class="paneltabs">
        <button type="button"><svg><use href="#wheel"/></svg>Pro..</button><button type="button" class="on"><svg><use href="#layers"/></svg>Lay..</button><button type="button"><svg viewBox="0 0 14 14"><path d="M1.500 2h11v8h-11z" fill="#ccc" stroke="#222" stroke-width="1.500"/><path d="M4 12.500h6" stroke="#222" stroke-width="1.500"/></svg>Dis..</button><button type="button"><svg viewBox="0 0 14 14"><path d="M1 2h9v3h3v7H4V6H1z" fill="#4468c8" stroke="#223a90"/><path d="M6 7q2-2 4 0l-2 2v2" stroke="#fff" stroke-width="1.300" fill="none"/></svg>Help</button>
        <svg class="cog"><use href="#gear"/></svg>
      </nav>
      <div class="panelbar">
        <button type="button" aria-label="New Layer"><svg viewBox="0 0 8 8"><path d="M1.500 1h3.500l1.500 1.500V7h-5z" fill="#fff" stroke="#333" stroke-width=".9"/></svg></button>
        <button type="button" aria-label="New Sublayer"><svg viewBox="0 0 8 8"><path d="M1 1h3v4H1z" fill="#fff" stroke="#333" stroke-width=".8"/><path d="M3.500 3h2L7 4.500V7.500H3.500z" fill="#fff" stroke="#333" stroke-width=".8"/></svg></button>
        <button type="button" aria-label="Delete"><svg viewBox="0 0 8 8"><path d="M1 1l6 6M7 1L1 7" stroke="#222" stroke-width="1.300"/></svg></button>
        <button type="button" aria-label="Move Up"><svg viewBox="0 0 8 8"><path d="M1 5.500L4 2.500l3 3z" fill="#ccc" stroke="#222"/></svg></button>
        <button type="button" aria-label="Move Down"><svg viewBox="0 0 8 8"><path d="M1 2.500l3 3 3-3z" fill="#ccc" stroke="#222"/></svg></button>
        <button type="button" aria-label="Move Left"><svg viewBox="0 0 8 8"><path d="M5.500 1v6L2.500 4z" fill="#bbb" stroke="#999"/></svg></button>
        <button type="button" aria-label="Filter"><svg viewBox="0 0 8 8"><path d="M.8 1h6.400L5 4v3.500H3V4z" fill="#999" stroke="#222" stroke-width=".9"/></svg></button>
        <button type="button" aria-label="Page"><svg viewBox="0 0 8 8"><path d="M1.500 1h5v6.500h-5z" fill="#ccc" stroke="#999" stroke-width=".8"/><path d="M2.500 3h3M2.500 5h3" stroke="#888" stroke-width=".7"/></svg></button>
        <button type="button" aria-label="Tools"><svg viewBox="0 0 8 8"><path d="M1 7l3.500-3.500" stroke="#222" stroke-width="1.400"/><path d="M3 1.500l4 1-1 2.500-2-1z" fill="#333"/></svg></button>
        <button type="button" aria-label="Help"><svg viewBox="0 0 8 8"><circle cx="4" cy="4" r="3" fill="#777" stroke="#333" stroke-width=".8"/><path d="M3 3.200q1-1.200 2 0L4 4.500v1" stroke="#fff" stroke-width=".8" fill="none"/></svg></button>
      </div>
      <div class="list">
        <table>
          <thead><tr><th class="name">Name</th><th class="ic"></th><th class="ic"></th><th class="ic"></th><th class="mat">Material</th></tr></thead>
          <tbody>
            <tr><td class="l1">Default</td><td><svg><use href="#bulb"/></svg></td><td><svg><use href="#unlock"/></svg></td><td><b class="sw black"></b></td><td></td></tr>
            <tr><td class="l1">Ground R...</td><td><svg><use href="#bulb"/></svg></td><td><svg><use href="#unlock"/></svg></td><td><b class="sw red"></b></td><td></td></tr>
            <tr class="sel"><td class="l1">First Floor</td><td><svg><use href="#bulb"/></svg></td><td><svg><use href="#unlock"/></svg></td><td><b class="sw purple"></b></td><td><b class="dot"></b></td></tr>
            <tr><td class="l1">Roof</td><td><svg><use href="#bulb-off"/></svg></td><td><svg><use href="#unlock"/></svg></td><td><b class="sw green"></b></td><td></td></tr>
            <tr><td class="tree"><i></i>Windows</td><td><svg><use href="#bulb"/></svg></td><td><svg><use href="#unlock"/></svg></td><td><b class="sw blue"></b></td><td></td></tr>
            <tr><td class="l2">Guides</td><td><svg><use href="#bulb"/></svg></td><td><svg><use href="#unlock"/></svg></td><td><b class="sw black"></b></td><td></td></tr>
            <tr class="current"><td class="tree"><i></i>Staircase<svg viewBox="0 0 8 8"><path d="M1.500 4l2 2.500L7 1.500" fill="none" stroke="#000" stroke-width="1.300"/></svg></td><td></td><td></td><td><b class="sw white"></b></td><td></td></tr>
            <tr><td class="l2">Guides</td><td><svg><use href="#bulb"/></svg></td><td><svg><use href="#unlock"/></svg></td><td><b class="sw black"></b></td><td></td></tr>
          </tbody>
        </table>
        <div class="scroll">
          <svg viewBox="0 0 8 8"><path d="M5 2L3 4l2 2" fill="none" stroke="#222" stroke-width="1.200"/></svg>
          <div class="track"><div class="thumb"></div></div>
          <svg viewBox="0 0 8 8"><path d="M3 2l2 2-2 2" fill="none" stroke="#222" stroke-width="1.200"/></svg>
        </div>
      </div>
    </aside>
  </main>

  <div class="osnap">
    <label><input type="checkbox" checked>End</label>
    <label><input type="checkbox" checked>Near</label>
    <label><input type="checkbox" checked>Point</label>
    <label><input type="checkbox" checked>Mid</label>
    <label><input type="checkbox" checked>Cen</label>
    <label><input type="checkbox">Int</label>
    <label><input type="checkbox">Perp</label>
    <label><input type="checkbox">Tan</label>
    <label><input type="checkbox">Quad</label>
    <label><input type="checkbox">Knot</label>
    <label><input type="checkbox" checked>Vertex</label>
    <label><input type="checkbox" disabled>Project</label>
    <label><input type="checkbox" disabled>Disable</label>
  </div>

  <footer class="status">
    <span>CPlane</span><span>x 41705.24</span><span>y 11958.74</span><span>z 0.00</span><span>Millimeters</span><span class="layer"><b class="sw white"></b>Staircase</span><button type="button">Grid Snap</button><button type="button">Ortho</button><button type="button" class="on">Planar</button><button type="button" class="on">Osnap</button><button type="button" class="on">SmartTrack</button><button type="button">Gumball</button><button type="button">Record History</button><button type="button">Filter</button><span class="last">Absolute tolerance: 0.01</span>
  </footer>
</body>
</html>
```
FILE: styles.css
```
* {
  box-sizing: border-box;
}
body {
  margin: 0;
  min-height: 100vh;
  display: flex;
  flex-direction: column;
  font-family: "Liberation Sans", Arial, sans-serif;
  font-size: 6px;
  line-height: 8px;
  color: #111;
  background: #dde1ea;
}
button {
  font: inherit;
  color: inherit;
  background: none;
  border: 0;
  padding: 0;
  margin: 0;
}
a {
  color: inherit;
  text-decoration: none;
}
svg {
  display: block;
}
.defs {
  position: absolute;
}

.titlebar {
  display: flex;
  align-items: center;
  height: 12px;
  background: #fff;
  padding-left: 1px;
}
.titlebar h1 {
  margin: 0 auto 0 3px;
  font-size: 6px;
  font-weight: normal;
}
.logo {
  width: 8px;
  height: 8px;
}
.winbuttons {
  display: flex;
  gap: 15px;
  padding-right: 9px;
}
.winbuttons svg {
  width: 8px;
  height: 8px;
}
.menu {
  display: flex;
  gap: 7px;
  height: 10px;
  padding-left: 3px;
  background: #fff;
}

.command {
  border-top: 2px solid #dcdfe6;
  border-left: 2px solid #dcdfe6;
  font-family: "Noto Sans", sans-serif;
}
.history, .prompt {
  display: flex;
  background: #fff;
  padding: 0 2px;
}
.history {
  height: 13px;
  border-bottom: 1px solid #d5d8de;
}
.history span {
  margin-right: auto;
}
.arrows {
  width: 7px;
  height: 13px;
}
.prompt {
  height: 10px;
  align-items: center;
  border-top: 1px solid #eee;
}
.prompt label {
  font-weight: bold;
}
.caret {
  width: 1px;
  height: 7px;
  background: #000;
}
.prompt input {
  flex: 1;
  min-width: 0;
  height: 8px;
  border: 0;
  padding: 0;
  font: inherit;
  outline: 0;
}
.spin {
  width: 8px;
  height: 8px;
}

.tooltabs {
  display: flex;
  align-items: flex-end;
  height: 13px;
  padding-left: 2px;
  background: #dde1ea;
  border-bottom: 1px solid #c3c9d6;
}
.tooltabs button {
  height: 9px;
  padding: 0 3px;
  background: #d3d9e9;
  border-top: 1px solid #c0c7d8;
  border-right: 1px solid #b5bdd0;
  border-top-right-radius: 4px;
}
.tooltabs .on {
  background: #f6f8fb;
  padding: 0 4px 0 5px;
}
.cog {
  width: 8px;
  height: 8px;
  margin-left: auto;
}

.toolbar {
  height: 20px;
  padding: 0 3px;
  background: linear-gradient(#f5f6fa, #dde1ea);
}
.tools {
  display: flex;
  justify-content: space-between;
  width: 459px;
}
.tools button, .sidetools button {
  position: relative;
  width: 14px;
  height: 14px;
}
.tools svg, .sidetools svg {
  width: 14px;
  height: 14px;
}
.fly::after {
  content: "";
  position: absolute;
  right: 0;
  bottom: 0;
  border: 1px solid #333;
  border-top-color: transparent;
  border-left-color: transparent;
}

.work {
  flex: 1;
  display: flex;
}
.sidetools {
  width: 33px;
  display: grid;
  grid-template-columns: 14px 14px;
  grid-template-rows: repeat(18, 14px);
  column-gap: 1px;
  align-content: space-between;
  height: 262px;
  padding: 4px 0 0 1px;
}
.center {
  flex: 1;
  display: flex;
  flex-direction: column;
  min-width: 0;
}
.viewport {
  flex: 1;
  position: relative;
  background: #bebebe;
  border-top: 1px solid #a5a5a5;
  border-left: 1px solid #aaa;
}
.scene {
  width: 100%;
  height: 100%;
}
.axis {
  font-size: 21px;
  fill: #444;
}
.vplabel {
  position: absolute;
  left: 0;
  top: 0;
  display: flex;
  align-items: center;
  gap: 3px;
  height: 9px;
  padding: 0 1px 0 4px;
  background: #8fa9c8;
}
.vplabel i {
  border: 2px solid transparent;
  border-top: 3px solid #111;
  border-bottom: 0;
  outline: 1px solid #7890b0;
}
.vptabs {
  display: flex;
  gap: 2px;
  height: 11px;
}
.vptabs button {
  height: 10px;
  padding: 0 2px 0 3px;
  background: #d3d9ea;
  border: 1px solid #c0c7d8;
  border-top: 0;
  border-radius: 0 0 3px 4px;
}
.vptabs .on {
  background: #fff;
  padding: 0 3px 0 4px;
}
.vptabs svg {
  width: 6px;
  height: 6px;
}

.panel {
  display: flex;
  flex-direction: column;
  width: 117px;
  margin: 3px 0 2px 4px;
  border: 1px solid #b8bfcc;
}
.paneltabs {
  display: flex;
  align-items: flex-end;
  height: 12px;
}
.paneltabs button {
  display: flex;
  align-items: center;
  gap: 1px;
  height: 11px;
  width: 26px;
  padding-left: 1px;
  background: #d3d9e9;
  border-top: 1px solid #c0c7d8;
  border-right: 1px solid #b5bdd0;
  border-top-right-radius: 5px;
}
.paneltabs .on {
  background: #fff;
}
.paneltabs button svg {
  width: 9px;
  height: 9px;
}
.panelbar {
  display: flex;
  gap: 3px;
  height: 11px;
  align-items: center;
  padding-left: 1px;
  background: #f3f5f9;
}
.panelbar svg {
  width: 8px;
  height: 8px;
}
.list {
  flex: 1;
  display: flex;
  flex-direction: column;
  background: #fff;
}
table {
  width: 100%;
  height: 80px;
  border-collapse: collapse;
  table-layout: fixed;
}
th {
  height: 10px;
  padding: 0 2px;
  text-align: left;
  font-weight: normal;
  border-right: 1px solid #eee;
}
td {
  padding: 0;
  line-height: 8px;
  white-space: nowrap;
}
td svg {
  width: 8px;
  height: 8px;
}
.name {
  width: 48px;
}
.ic {
  width: 9px;
}
.l1 {
  padding-left: 10px;
}
.l2 {
  padding-left: 17px;
}
.tree i {
  display: inline-block;
  width: 5px;
  height: 5px;
  margin: 0 3px 0 2px;
  border: 1px solid #9ab;
  background: linear-gradient(#446, #446) center / 3px 1px no-repeat #fff;
}
.tree svg {
  display: inline-block;
  margin-left: 2px;
  vertical-align: top;
}
.current {
  font-weight: bold;
}
.sel {
  background: #2f8fe6;
  color: #fff;
}
.sw {
  display: block;
  width: 7px;
  height: 7px;
  border: 1px solid #333;
}
.black { background: #111; }
.red { background: #e01010; }
.purple { background: #8a3fd0; }
.green { background: #0a8a1c; }
.blue { background: #1414f0; }
.white { background: #fff; }
.dot {
  display: block;
  width: 6px;
  height: 6px;
  margin-left: 1px;
  border-radius: 50%;
  background: #fff;
}
.scroll {
  display: flex;
  margin-top: auto;
}
.scroll svg {
  width: 8px;
  height: 8px;
}
.track {
  flex: 1;
  height: 7px;
  background: #f0f0f0;
}
.thumb {
  width: 56%;
  height: 7px;
  background: #c8c8c8;
}

.osnap {
  display: flex;
  gap: 3px;
  height: 17px;
  align-items: center;
  padding-left: 5px;
}
.osnap label {
  display: flex;
  align-items: center;
  gap: 2px;
}
.osnap input {
  appearance: none;
  display: grid;
  place-content: center;
  width: 7px;
  height: 7px;
  margin: 0;
  border: 1px solid #777;
  background: #fff;
}
.osnap input:checked::before {
  content: "";
  width: 4px;
  height: 2px;
  border: solid #222;
  border-width: 0 0 1px 1px;
  transform: rotate(-45deg);
}
.osnap input:disabled {
  background: #ddd;
  border-color: #bbb;
}

.status {
  display: grid;
  grid-template-columns: 28px 45px 45px 44px 46px 89px 38px 24px 28px 28px 43px 34px 55px 23px 1fr;
  height: 11px;
  border-top: 1px solid #b8bfcc;
  line-height: 10px;
  text-align: center;
}
.status > * {
  border-right: 1px solid #b8bfcc;
  white-space: nowrap;
}
.status .on {
  font-weight: bold;
  background: #e6f1fa;
}
.status .layer {
  display: flex;
  align-items: center;
  gap: 1px;
  padding-left: 1px;
}
.status .last {
  text-align: left;
  padding-left: 1px;
}
```
